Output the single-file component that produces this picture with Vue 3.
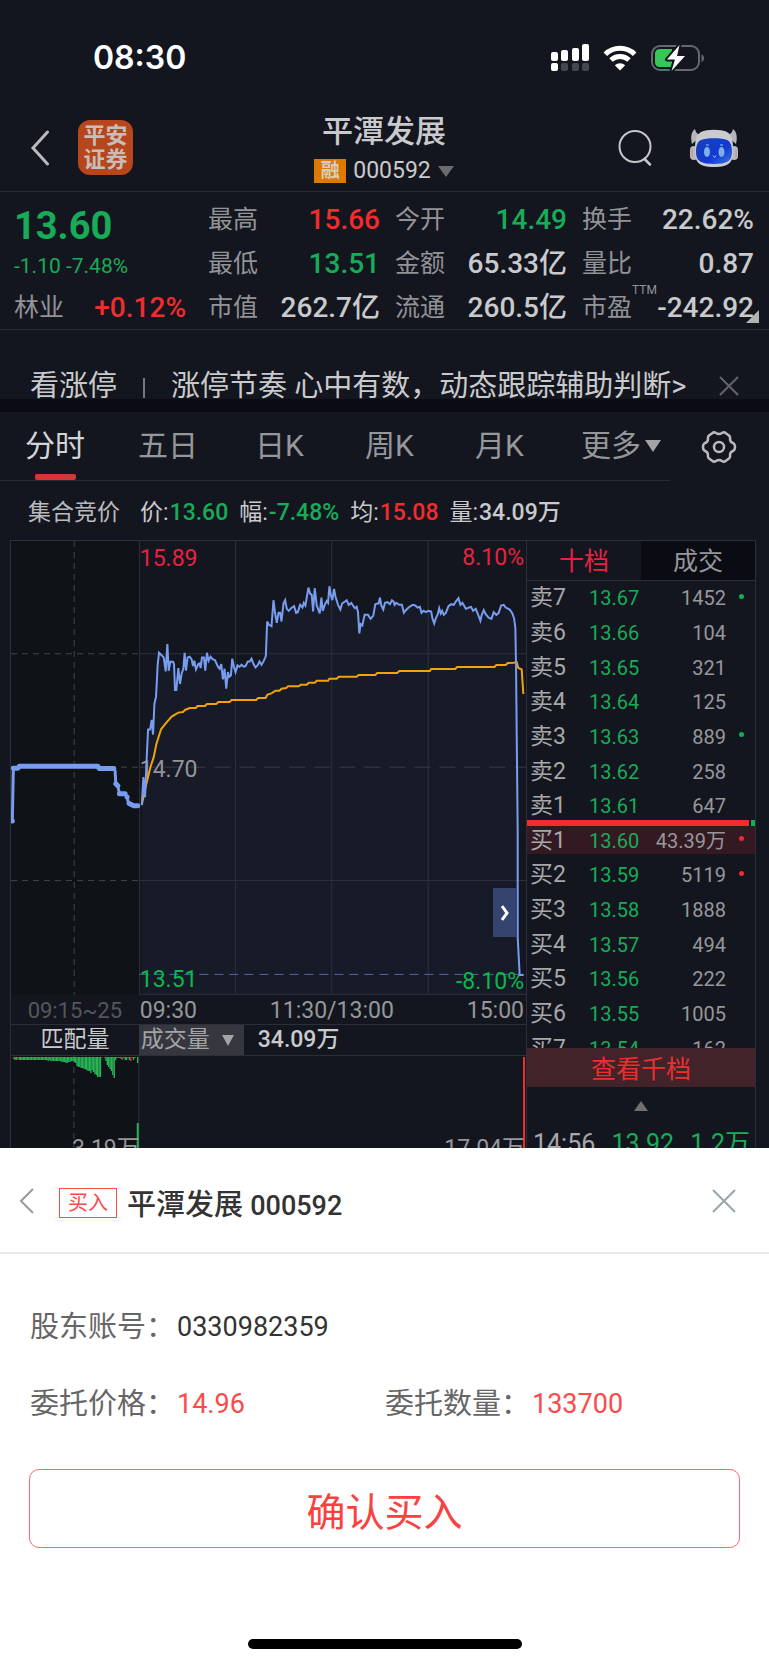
<script setup>
import { ref } from 'vue'

const stats = [
  [
    { label: '最高', value: '15.66', tone: 'up' },
    { label: '最低', value: '13.51', tone: 'down' },
    { label: '市值', value: '262.7亿', tone: '' },
  ],
  [
    { label: '今开', value: '14.49', tone: 'down' },
    { label: '金额', value: '65.33亿', tone: '' },
    { label: '流通', value: '260.5亿', tone: '' },
  ],
  [
    { label: '换手', value: '22.62%', tone: '' },
    { label: '量比', value: '0.87', tone: '' },
    { label: '市盈', sup: 'TTM', value: '-242.92', tone: '' },
  ],
]

const tabs = ['分时', '五日', '日K', '周K', '月K']
const activeTab = ref('分时')

const info = [
  { label: '价', value: '13.60', tone: 'down' },
  { label: '幅', value: '-7.48%', tone: 'down' },
  { label: '均', value: '15.08', tone: 'up' },
  { label: '量', value: '34.09万', tone: '' },
]

const orders = [
  { name: '卖7', price: '13.67', volume: '1452', dot: 'green' },
  { name: '卖6', price: '13.66', volume: '104' },
  { name: '卖5', price: '13.65', volume: '321' },
  { name: '卖4', price: '13.64', volume: '125' },
  { name: '卖3', price: '13.63', volume: '889', dot: 'green' },
  { name: '卖2', price: '13.62', volume: '258' },
  { name: '卖1', price: '13.61', volume: '647' },
  { name: '买1', price: '13.60', volume: '43.39万', dot: 'red', best: true },
  { name: '买2', price: '13.59', volume: '5119', dot: 'red' },
  { name: '买3', price: '13.58', volume: '1888' },
  { name: '买4', price: '13.57', volume: '494' },
  { name: '买5', price: '13.56', volume: '222' },
  { name: '买6', price: '13.55', volume: '1005' },
  { name: '买7', price: '13.54', volume: '162' },
]

// Intraday series in chart units
const pricePoints =
  '426,824 431,740 436,800 440,700 445,597 451,597 456,568 460,612 464,520 469,498 474,400 478,366 484,372 492,380 498,422 503,340 507,420 512,393 520,393 523,400 526,478 530,478 536,412 541,460 546,428 551,414 555,366 559,420 564,380 570,378 576,386 580,406 584,390 589,416 596,400 600,398 603,412 607,380 613,380 617,420 622,366 627,390 633,378 640,386 646,388 655,408 660,414 665,400 670,446 675,414 680,474 685,424 689,438 694,434 698,384 703,408 708,424 714,404 720,408 726,402 732,408 738,406 745,392 751,392 756,384 762,400 768,410 774,404 780,392 786,402 792,392 799,376 803,272 808,282 816,286 822,208 827,248 832,276 837,246 842,246 846,272 852,218 857,208 862,234 868,240 875,232 884,226 890,246 895,244 902,222 909,230 913,216 918,224 927,170 932,188 937,192 941,242 946,172 952,224 961,248 966,200 970,240 976,222 982,210 986,216 990,166 994,192 999,208 1004,174 1008,196 1016,222 1023,236 1028,218 1034,214 1042,208 1048,222 1056,216 1062,226 1067,232 1072,228 1076,244 1080,308 1084,280 1089,284 1096,252 1106,252 1114,264 1122,254 1128,220 1134,218 1138,218 1142,200 1146,224 1152,236 1157,216 1165,214 1172,220 1178,208 1183,212 1186,222 1191,216 1200,222 1208,222 1214,246 1220,238 1228,230 1240,222 1248,224 1255,230 1262,228 1267,246 1273,240 1280,244 1287,240 1296,242 1300,264 1305,278 1310,262 1316,250 1320,232 1325,248 1329,240 1334,252 1340,246 1348,226 1356,220 1364,222 1370,212 1378,202 1384,222 1390,216 1400,234 1410,230 1416,228 1422,240 1430,234 1435,246 1444,270 1448,252 1454,238 1460,250 1468,260 1477,264 1484,244 1492,252 1499,246 1506,224 1514,222 1520,230 1532,236 1540,248 1545,262 1549,290 1551,400 1556,900 1556,1220 1562,1335 1574,1335'
const averagePoints =
  '426,824 440,760 452,710 462,680 470,640 484,596 500,576 516,558 536,546 550,544 556,538 570,532 588,532 594,526 616,526 622,520 650,520 656,514 690,514 696,508 770,508 776,502 798,502 804,492 816,488 828,480 840,480 846,474 860,472 866,467 898,467 904,462 922,462 928,456 946,456 952,450 986,450 990,444 1012,444 1018,438 1072,438 1078,433 1128,433 1134,427 1194,427 1200,421 1292,421 1296,415 1368,415 1374,409 1486,409 1492,403 1520,403 1526,397 1544,396 1553,394 1558,412 1568,416 1573,490'
const areaPoints = `426,1392 ${pricePoints} 1574,1392`

// Matched volume of the call auction: depth of each bar
const auctionBars = [
  2, 3, 3, 2, 3, 3, 3, 3, 3, 3, 3, 3, 3, 3, 3, 3, 3, 3, 3, 3, 3, 3, 3, 3, 3, 4, 3, 4, 4, 4, 4, 4, 4, 4, 4, 5, 5, 5, 6, 6, 5, 5, 4, 4, 5, 6, 9, 10, 10, 11, 11, 12, 12, 13, 14, 14, 16, 13, 15, 17, 18, 20, 20, 20, 1, 0, 1, 4, 8, 10, 12, 14, 18, 21, 3, 1, 1, 1, 2, 3, 1, 3, 3, 1, 3, 4, 1, 3, 1, 0, 6,
]
const redBars = [0, 3, 64, 66, 76, 79, 83, 85, 86]
</script>

<template>
  <div class="page">
    <section class="market">
      <div class="status">
        <span class="clock">08:30</span>
        <span class="status-icons">
          <svg width="40" height="28" viewBox="0 0 40 28" aria-hidden="true">
            <g fill="#fff">
              <rect x="1" y="8" width="7" height="9" rx="2" />
              <rect x="11" y="6" width="7" height="11" rx="2" />
              <rect x="22" y="4" width="7" height="13" rx="2" />
              <rect x="32" y="0" width="7" height="17" rx="2" />
              <rect x="1" y="19" width="7" height="8" rx="2" />
            </g>
            <g fill="#45474f">
              <rect x="11" y="19" width="7" height="8" rx="2" />
              <rect x="22" y="19" width="7" height="8" rx="2" />
              <rect x="32" y="19" width="7" height="8" rx="2" />
            </g>
          </svg>
          <svg width="34" height="26" viewBox="0 0 34 26" aria-hidden="true">
            <g fill="none" stroke="#fff" stroke-width="5">
              <path d="M2.3 9.3a21 21 0 0 1 29.4 0" />
              <path d="M8 15a13 13 0 0 1 18 0" />
            </g>
            <path d="M17 25.500l-5.200-5.200a7.400 7.400 0 0 1 10.400 0z" fill="#fff" />
          </svg>
          <svg width="56" height="28" viewBox="0 0 56 28" aria-hidden="true">
            <rect x="2" y="2" width="47" height="24" rx="8" fill="none" stroke="#66686f" stroke-width="2" />
            <path d="M51.500 10.500c3.400 1 3.400 6.500 0 7.500z" fill="#66686f" />
            <path d="M9.500 5H22v18H9.500A4.500 4.500 0 0 1 5 18.500v-9A4.500 4.500 0 0 1 9.500 5z" fill="#34c759" />
            <path d="M29.500 1L17 15.500h8L21.500 27 35 12h-8z" fill="#fff" stroke="#14161f" stroke-width="4" paint-order="stroke" stroke-linejoin="round" />
          </svg>
        </span>
      </div>

      <header class="topbar">
        <div class="side">
          <button class="icon-btn" aria-label="返回">
            <svg width="20" height="36" viewBox="0 0 20 36"><path d="M17.500 2L3 18l14.500 16" fill="none" stroke="#b9babd" stroke-width="3" stroke-linecap="round" /></svg>
          </button>
          <a class="logo" href="#"><span>平安</span><span>证券</span></a>
        </div>
        <div class="title">
          <h1>平潭发展</h1>
          <p><span class="margin-tag">融</span><span>000592</span><svg width="16" height="11" viewBox="0 0 16 11"><path d="M0 0h16l-8 11z" fill="#6b6c70" /></svg></p>
        </div>
        <div class="side right">
          <button class="icon-btn" aria-label="搜索">
            <svg width="34" height="37" viewBox="0 0 34 37"><circle cx="17" cy="17.500" r="15.500" fill="none" stroke="#c6c7ca" stroke-width="2" /><path d="M26.500 30l5.500 5.500" stroke="#c6c7ca" stroke-width="2.500" stroke-linecap="round" /></svg>
          </button>
          <button class="icon-btn" aria-label="智能助手">
            <svg width="48" height="38" viewBox="0 0 48 38">
              <defs>
                <linearGradient id="face" x1="0" y1="0" x2="1" y2="1"><stop offset="0" stop-color="#1742b8" /><stop offset="0.600" stop-color="#1239d2" /><stop offset="1" stop-color="#3f75e4" /></linearGradient>
              </defs>
              <path d="M2 15C0 7 2 2 5 0c1 4 3 6 7 6zM46 15c2-8 0-13-3-15-1 4-3 6-7 6z" fill="#b4b6b9" />
              <rect x="0" y="17" width="8" height="14" rx="4" fill="#b7b9bd" />
              <rect x="40" y="17" width="8" height="14" rx="4" fill="#b7b9bd" />
              <path d="M2 20v8M46 20v8" stroke="#c58f8f" stroke-width="1" />
              <path d="M11 3c6-3 20-3 26 0 6 3 6 12 6 18 0 12-3 17-19 17S5 33 5 21c0-6 0-15 6-18z" fill="#c9cbcf" />
              <path d="M11 11c5-2.500 21-2.500 26 0 4 1.500 5 7 5 12 0 9-5 12-18 12S6 32 6 23c0-5 1-10.500 5-12z" fill="url(#face)" />
              <g fill="#7eb0e6"><ellipse cx="17" cy="23" rx="3" ry="5" /><ellipse cx="31.500" cy="23" rx="3" ry="5" /></g>
              <path d="M23 26.500l1.500 2 1.500-2M16 16h3M30 16h3" stroke="#9cc4ef" stroke-width="1" fill="none" />
            </svg>
          </button>
        </div>
      </header>

      <section class="quote">
        <div class="last">
          <strong class="price down">13.60</strong>
          <span class="change down">-1.10 -7.48%</span>
          <span class="industry"><span class="label">林业</span><span class="up">+0.12%</span></span>
        </div>
        <dl v-for="(group, i) in stats" :key="i" class="stats">
          <div v-for="s in group" :key="s.label">
            <dt class="label">{{ s.label }}<sup v-if="s.sup">{{ s.sup }}</sup></dt>
            <dd :class="s.tone">{{ s.value }}</dd>
          </div>
        </dl>
        <svg class="corner" width="13" height="13" viewBox="0 0 13 13"><path d="M13 0v13H0z" fill="#b3b3b3" /></svg>
      </section>

      <div class="promo">
        <a href="#"><span>看涨停</span><i></i><span>涨停节奏 心中有数，动态跟踪辅助判断&gt;</span></a>
        <button class="icon-btn" aria-label="关闭">
          <svg width="20" height="20" viewBox="0 0 20 20"><path d="M1 1l18 18M19 1L1 19" stroke="#61636f" stroke-width="2" /></svg>
        </button>
      </div>

      <nav class="tabs">
        <div class="tab-list">
          <button v-for="t in tabs" :key="t" :class="{ active: t === activeTab }" @click="activeTab = t">{{ t }}</button>
          <button>更多<svg width="16" height="12" viewBox="0 0 16 12"><path d="M0 0h16l-8 12z" fill="#a2a3a6" /></svg></button>
        </div>
        <button class="icon-btn gear" aria-label="设置">
          <svg width="36" height="34" viewBox="0 0 36 34" fill="none" stroke="#b9babd" stroke-width="2.500">
            <path d="M11.500 3Q13 1.500 15 3Q18 5 21 3Q23 1.500 24.500 3L28 5.500Q29.500 7 29 9Q29 12 32 13Q34 14 34 17Q34 20 32 21Q29 22 29 25Q29.500 27 28 28.500L24.500 31Q23 32.500 21 31Q18 29 15 31Q13 32.500 11.500 31L8 28.500Q6.500 27 7 25Q7 22 4 21Q2 20 2 17Q2 14 4 13Q7 12 7 9Q6.500 7 8 5.500Z" stroke-linejoin="round" />
            <circle cx="18" cy="17" r="5" />
          </svg>
        </button>
      </nav>

      <p class="info">
        <span class="phase">集合竞价</span>
        <span v-for="n in info" :key="n.label">{{ n.label }}:<b :class="n.tone">{{ n.value }}</b></span>
      </p>

      <div class="board">
        <div class="charts">
          <div class="trend">
            <svg class="plot" viewBox="33 30 1548 1365" preserveAspectRatio="none" aria-hidden="true">
              <rect x="33" y="30" width="386" height="1365" fill="#0f1217" />
              <polygon :points="areaPoints" fill="#171a27" />
              <g class="grid">
                <path d="M419 30V1395M708 30V1395M997 30V1395M1287 30V1395M419 369H1581M419 1051H1581M419 1393H1581" />
              </g>
              <path class="dash-left" d="M223 30V1395M33 369H419M33 710H419M33 1051H419" />
              <path class="dash-mid" d="M419 710H1581" />
              <path class="dash-low" d="M419 1333H1581" />
              <path class="auction" d="M37 872L40 713H54L58 707H294L298 714H342L346 722 348 760 354 766 359 790H376L382 800 386 818 398 822 402 826H414" />
              <path class="auction bold" d="M37 872V872M40 713H54L58 707H294L298 714H342M348 760L354 766M359 790H376M382 800V800M388 819L402 826H414" />
            </svg>
            <span class="tag top-left">15.89</span>
            <span class="tag top-right">8.10%</span>
            <span class="tag middle">14.70</span>
            <span class="tag low-left">13.51</span>
            <span class="tag low-right">-8.10%</span>
            <svg class="plot" viewBox="33 30 1548 1365" preserveAspectRatio="none" aria-hidden="true">
              <polyline class="average" :points="averagePoints" />
              <polyline class="price-line" :points="pricePoints" />
            </svg>
            <button class="expand" aria-label="展开">
              <svg width="8" height="16" viewBox="0 0 8 16"><path d="M1 1l5 7-5 7" fill="none" stroke="#fff" stroke-width="3" /></svg>
            </button>
          </div>
          <div class="axis split">
            <span class="auction-time">09:15~25</span>
            <span class="times"><span>09:30</span><span>11:30/13:00</span><span>15:00</span></span>
          </div>
          <div class="volume-head split">
            <span class="match">匹配量</span>
            <span class="volume-pick">
              <button>成交量<svg width="12" height="11" viewBox="0 0 12 11"><path d="M0 0h12L6 11z" fill="#a4a4a6" /></svg></button>
              <span>34.09万</span>
            </span>
          </div>
          <div class="volume">
            <svg class="plot" viewBox="0 0 516 92" preserveAspectRatio="none" aria-hidden="true">
              <rect width="128" height="92" fill="#0f1217" />
              <path class="grid" d="M128 0V92" />
              <path class="dash-left" d="M63 0V92" />
              <rect
                v-for="(h, i) in auctionBars"
                :key="i"
                :x="2 + i * 1.380"
                y="1"
                width="1.380"
                :height="h"
                :fill="redBars.includes(i) ? '#d8283c' : '#27b457'"
              />
              <rect x="126" y="67" width="2" height="25" fill="#27b457" />
              <rect x="513" y="1" width="2" height="91" fill="#f02c2c" />
            </svg>
            <span class="volume-cap left-cap">3.19万</span>
            <span class="volume-cap right-cap">17.04万</span>
          </div>
        </div>

        <aside class="book">
          <div class="book-tabs">
            <button class="on">十档</button>
            <button>成交</button>
          </div>
          <div class="ladder">
            <table>
              <tbody>
                <tr v-for="o in orders" :key="o.name" :class="{ best: o.best }">
                  <th scope="row">{{ o.name }}</th>
                  <td class="down">{{ o.price }}</td>
                  <td class="vol">{{ o.volume }}</td>
                  <td class="mark"><i v-if="o.dot" :class="o.dot"></i></td>
                </tr>
              </tbody>
            </table>
            <div class="ratio"><i></i><i></i></div>
          </div>
          <button class="more">查看千档</button>
          <svg class="up-mark" width="14" height="10" viewBox="0 0 14 10"><path d="M7 0l7 10H0z" fill="#707074" /></svg>
          <p class="deal"><span>14:56</span><span class="down">13.92</span><span class="down">1.2万</span></p>
        </aside>
      </div>
    </section>

    <section class="sheet">
      <header class="sheet-head">
        <button class="icon-btn" aria-label="返回">
          <svg width="16" height="28" viewBox="0 0 16 28"><path d="M14 2L2 14l12 12" fill="none" stroke="#999" stroke-width="2" /></svg>
        </button>
        <span class="buy-tag">买入</span>
        <h2>平潭发展 <span>000592</span></h2>
        <button class="icon-btn close" aria-label="关闭">
          <svg width="24" height="24" viewBox="0 0 24 24"><path d="M1 1l22 22M23 1L1 23" stroke="#98a5ad" stroke-width="2" /></svg>
        </button>
      </header>
      <dl class="order">
        <div class="wide"><dt>股东账号：</dt><dd>0330982359</dd></div>
        <div><dt>委托价格：</dt><dd class="red">14.96</dd></div>
        <div><dt>委托数量：</dt><dd class="red">133700</dd></div>
      </dl>
      <button class="confirm">确认买入</button>
      <div class="home"></div>
    </section>
  </div>
</template>

<style>
body {
  margin: 0;
  background: #fff;
}
</style>

<style scoped>
.page {
  display: flex;
  flex-direction: column;
  min-height: 100vh;
  font-family: Roboto, "Noto Sans CJK SC", sans-serif;
  color: #c9cacc;
}
.page *,
.page {
  box-sizing: border-box;
}
button {
  margin: 0;
  padding: 0;
  border: 0;
  background: none;
  font: inherit;
  color: inherit;
  cursor: pointer;
}
a {
  color: inherit;
  text-decoration: none;
}
h1,
h2,
p,
dl,
dd {
  margin: 0;
}
svg {
  display: block;
  flex: none;
}
.icon-btn {
  flex: none;
}
.up {
  color: #f22c2c;
}
.down {
  color: #17ac57;
}
.market {
  background: #14161f;
  overflow: hidden;
}

.status {
  display: flex;
  justify-content: space-between;
  align-items: center;
  height: 112px;
  padding: 3px 63px 0 93px;
}
.clock {
  font: 600 32px/40px Inter, sans-serif;
  color: #fff;
}
.status-icons {
  display: flex;
  align-items: center;
  gap: 13px;
}

.topbar {
  display: grid;
  grid-template-columns: 1fr auto 1fr;
  grid-template-rows: 71px;
  align-items: center;
  height: 80px;
  padding: 0 31px 0 30px;
  border-bottom: 1px solid #282b38;
}
.side {
  display: flex;
  align-items: center;
  gap: 28px;
}
.side.right {
  justify-content: flex-end;
  gap: 38px;
}
.logo {
  display: flex;
  flex-direction: column;
  justify-content: center;
  width: 55px;
  height: 55px;
  border-radius: 12px;
  background: #b6461c;
  color: #c9bdb8;
  text-align: center;
  font-size: 22px;
  font-weight: 700;
  line-height: 24px;
}
.title {
  display: flex;
  flex-direction: column;
  align-items: center;
  align-self: start;
}
.title h1 {
  font-size: 31px;
  font-weight: 500;
  line-height: 40px;
}
.title p {
  display: flex;
  align-items: center;
  gap: 7px;
  height: 38px;
  font-size: 23px;
  line-height: 24px;
}
.margin-tag {
  width: 32px;
  height: 24px;
  background: #dc7a00;
  color: #d9cdbb;
  font-size: 19px;
  font-weight: 700;
  line-height: 23px;
  text-align: center;
}

.quote {
  position: relative;
  display: grid;
  grid-template-columns: 179px 1fr 1fr 1fr;
  gap: 15px;
  padding: 6px 15px 0 14px;
  height: 138px;
  border-bottom: 1px solid #282b38;
  font-size: 28px;
  font-weight: 500;
  line-height: 44px;
}
.last {
  display: flex;
  flex-direction: column;
}
.price {
  font-size: 38px;
  font-weight: 700;
  line-height: 56px;
}
.change {
  margin-bottom: 8px;
  font-size: 21px;
  font-weight: 400;
  line-height: 24px;
}
.industry {
  display: flex;
  justify-content: space-between;
  padding-right: 7px;
}
.stats > div {
  display: flex;
  justify-content: space-between;
}
.label {
  position: relative;
  color: #929397;
  font-size: 25px;
  font-weight: 400;
}
.label sup {
  position: absolute;
  left: 100%;
  top: -3px;
  font-size: 12px;
  line-height: 14px;
}
.corner {
  position: absolute;
  right: 10px;
  bottom: 6px;
}

.promo {
  display: flex;
  align-items: flex-start;
  justify-content: space-between;
  height: 82px;
  padding: 36px 30px 0;
  border-bottom: 13px solid #0b0b14;
  overflow: hidden;
  font-size: 29px;
  line-height: 40px;
  white-space: nowrap;
}
.promo a {
  display: flex;
  align-items: center;
}
.promo i {
  width: 2px;
  height: 20px;
  margin: 4px 26px 0;
  background: #77787d;
}
.promo .icon-btn {
  padding-top: 10px;
}

.tabs {
  display: flex;
  justify-content: space-between;
  height: 69px;
  padding-right: 32px;
}
.tab-list {
  display: flex;
  gap: 53px;
  width: 670px;
  padding: 0 0 0 25px;
  border-bottom: 1px solid #282b38;
  color: #96979a;
}
.tab-list button {
  position: relative;
  display: flex;
  align-items: center;
  gap: 4px;
  min-width: 57px;
  font-size: 30px;
  line-height: 64px;
  justify-content: center;
  white-space: nowrap;
}
.tab-list .active {
  color: #d3d4d7;
}
.tab-list .active::after {
  content: "";
  position: absolute;
  left: 10px;
  bottom: 0;
  width: 41px;
  height: 6px;
  border-radius: 2px;
  background: #d63636;
}
.gear {
  height: 69px;
}

.info {
  display: flex;
  align-items: center;
  gap: 11px;
  height: 59px;
  padding: 4px 28px 0;
  font-size: 23px;
  line-height: 30px;
}
.info .phase {
  margin-right: 9px;
  color: #b9babd;
}
.info b {
  padding-left: 1px;
  font-weight: 500;
}

.board {
  display: grid;
  grid-template-columns: minmax(0, 1fr) 229px;
  height: 608px;
  margin: 0 13px 0 10px;
  border: 1px solid #2b2e3b;
  border-bottom: 0;
  overflow: hidden;
}
.charts {
  display: flex;
  flex-direction: column;
}
.trend {
  position: relative;
  height: 454px;
}
.plot {
  position: absolute;
  inset: 0;
  width: 100%;
  height: 100%;
}
.plot path,
.plot polyline {
  fill: none;
  vector-effect: non-scaling-stroke;
}
.grid,
.grid path {
  stroke: #2d303d;
  stroke-width: 1px;
}
.plot .dash-left {
  stroke: #42454a;
  stroke-dasharray: 6 5;
}
.plot .dash-mid {
  stroke: #3a3c48;
  stroke-dasharray: 16 9;
}
.plot .dash-low {
  stroke: #5068ac;
  stroke-dasharray: 9 6;
}
.plot .auction {
  stroke: #789cf0;
  stroke-width: 3px;
  stroke-linecap: round;
  stroke-linejoin: round;
}
.plot .bold {
  stroke-width: 5px;
}
.plot .average {
  stroke: #f2a20c;
  stroke-width: 2px;
}
.plot .price-line {
  stroke: #789cf0;
  stroke-width: 2px;
}
.tag {
  position: absolute;
  font-size: 23px;
  line-height: 26px;
}
.top-left {
  left: 25%;
  top: 5px;
  color: #e8213f;
}
.top-right {
  right: 2px;
  top: 4px;
  color: #e8213f;
}
.middle {
  left: 25%;
  top: 216px;
  color: #939498;
}
.low-left {
  left: 25%;
  bottom: 2px;
  color: #08b94f;
}
.low-right {
  right: 2px;
  bottom: 0;
  color: #08b94f;
}
.expand {
  position: absolute;
  right: 9px;
  bottom: 58px;
  display: flex;
  align-items: center;
  justify-content: center;
  width: 24px;
  height: 49px;
  background: #34446f;
}
.split {
  display: grid;
  grid-template-columns: 128fr 388fr;
  border-bottom: 1px solid #2b2e3b;
  font-size: 23px;
}
.axis {
  height: 30px;
  line-height: 31px;
  color: #96979a;
}
.auction-time {
  text-align: center;
  font-size: 22px;
  color: #55565a;
}
.times {
  display: flex;
  justify-content: space-between;
  padding: 0 2px 0 1px;
}
.volume-head {
  height: 31px;
  line-height: 30px;
  font-weight: 500;
}
.match {
  text-align: center;
  font-weight: 400;
}
.volume-pick {
  display: flex;
  gap: 14px;
}
.volume-pick button {
  display: flex;
  align-items: center;
  gap: 12px;
  width: 105px;
  padding-left: 2px;
  background: #35363e;
  color: #a4a4a6;
  font-weight: 400;
}
.volume {
  position: relative;
  height: 92px;
}
.volume-cap {
  position: absolute;
  top: 80px;
  font-size: 23px;
  line-height: 26px;
  color: #96979a;
}
.left-cap {
  right: 75%;
}
.right-cap {
  right: 1px;
}

.book {
  display: flex;
  flex-direction: column;
  border-left: 1px solid #2b2e3b;
}
.book-tabs {
  display: grid;
  grid-template-columns: 1fr 1fr;
  grid-template-rows: 39px;
  height: 40px;
  border-bottom: 1px solid #2b2e3b;
  font-size: 25px;
  line-height: 42px;
  color: #96979a;
}
.book-tabs button {
  background: #0b0b14;
}
.book-tabs .on {
  background: none;
  color: #e8213f;
}
.ladder {
  position: relative;
  height: 467px;
  overflow: hidden;
}
table {
  width: 100%;
  height: 485px;
  border-collapse: collapse;
  table-layout: fixed;
}
th,
td {
  padding: 0;
  text-align: left;
  font-size: 20px;
  font-weight: 400;
  line-height: 30px;
  vertical-align: middle;
}
th {
  width: 62px;
  padding-left: 3px;
  color: #a7a7aa;
  font-size: 23px;
}
.vol {
  width: 78px;
  text-align: right;
  color: #96979a;
}
.mark {
  width: 29px;
}
.mark i {
  display: block;
  width: 5px;
  height: 5px;
  margin: 0 0 4px 13px;
  border-radius: 50%;
}
.green {
  background: #17ac57;
}
.red {
  background: #f22c2c;
}
.best {
  background: linear-gradient(#331a22, #331a22) center 2px / 100% 29px no-repeat;
}
.ratio {
  position: absolute;
  left: 0;
  right: 0;
  top: 239px;
  display: flex;
  gap: 2px;
}
.ratio i {
  height: 6px;
  background: #f22c2c;
}
.ratio i:first-child {
  flex: 1;
}
.ratio i:last-child {
  width: 4px;
  background: #17ac57;
}
.more {
  height: 39px;
  background: #422329;
  color: #ea2f2f;
  font-size: 25px;
  line-height: 43px;
}
.up-mark {
  margin: 14px auto 0;
}
.deal {
  display: flex;
  justify-content: space-between;
  padding: 18px 5px 0 6px;
  font-size: 25px;
  line-height: 30px;
  color: #a7a7aa;
}

.sheet {
  display: flex;
  flex: 1;
  flex-direction: column;
  background: #fff;
}
.sheet-head {
  display: flex;
  align-items: center;
  height: 106px;
  padding: 1px 33px 0 19px;
  border-bottom: 2px solid #e9e9e9;
}
.buy-tag {
  width: 58px;
  height: 30px;
  margin: 4px 10px 0 24px;
  border: 1px solid #fb4a4a;
  color: #fb4a4a;
  font-size: 20px;
  line-height: 29px;
  text-align: center;
}
.sheet-head h2 {
  flex: 1;
  padding-top: 9px;
  color: #333;
  font-size: 29px;
  font-weight: 500;
  line-height: 40px;
}
.sheet-head h2 span {
  font-size: 27px;
}
.order {
  display: grid;
  grid-template-columns: 1fr 1fr;
  row-gap: 37px;
  padding: 53px 29px 45px 30px;
  font-size: 29px;
  line-height: 40px;
}
.order .wide {
  grid-column: 1 / -1;
}
.order > div {
  display: flex;
}
.order dt {
  color: #666;
}
.order dd {
  padding-left: 2px;
  color: #333;
  font-size: 27px;
}
.order .red {
  background: none;
  color: #fb4a4a;
}
.confirm {
  height: 79px;
  margin: 0 29px;
  border: 1px solid #fb6a6a;
  border-radius: 10px;
  color: #fb4040;
  font-size: 39px;
}
.home {
  width: 274px;
  height: 10px;
  margin: auto auto 16px;
  border-radius: 5px;
  background: #000;
}
</style>
